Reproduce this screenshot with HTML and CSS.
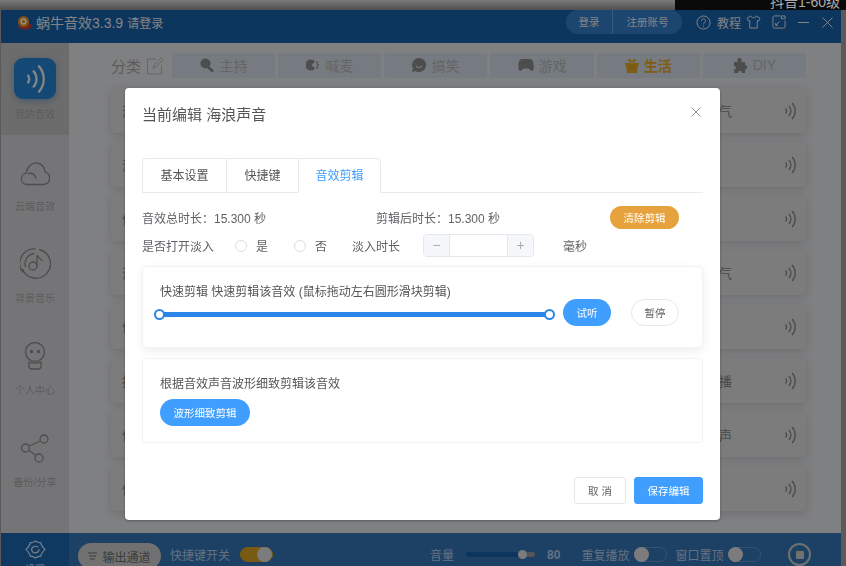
FILE: index.html
```html
<!DOCTYPE html>
<html lang="en">
<head>
    <meta charset="UTF-8">
    <meta name="viewport" content="width=device-width, initial-scale=1.0">
    <title>蜗牛音效</title>
    <link rel="stylesheet" href="styles.css">
</head>
<body>

    <svg class="defs" width="0" height="0">
        <symbol id="wave" viewBox="0 0 12 18">
            <path d="M1.5 6.5a3.5 3.5 0 0 1 0 5M4.8 4a7 7 0 0 1 0 10M8 1a11.500 11.500 0 0 1 0 16" fill="none" stroke="currentColor" stroke-width="1.4"/>
        </symbol>
    </svg>

    <div class="desk-top">
        <div class="desk-left"></div>
        <div class="desk-right">抖音1-60级</div>
    </div>

    <div class="app">
        <header class="titlebar">
            <svg class="logo" width="15" height="15" viewBox="0 0 15 15">
                <ellipse cx="8" cy="11" rx="6.500" ry="3.500" fill="#c23a30"/>
                <circle cx="6.500" cy="6.500" r="5.500" fill="#d9861c"/>
                <circle cx="6.500" cy="6.500" r="2.400" fill="none" stroke="#eee" stroke-width="1.500"/>
            </svg>
            <span class="app-name">蜗牛音效3.3.9</span>
            <span class="app-login">请登录</span>
            <div class="account">
                <span class="account-item login">登录</span>
                <span class="account-item register">注册账号</span>
            </div>
            <svg class="help" width="15" height="15" viewBox="0 0 16 16" fill="none" stroke="currentColor">
                <circle cx="8" cy="8" r="7"/>
                <path d="M5.800 6.200a2.200 2.200 0 1 1 3.400 1.900c-.8.500-1.200.9-1.200 1.900M8 11.500v1.200"/>
            </svg>
            <span class="guide">教程</span>
            <svg class="shirt" width="15" height="14" viewBox="0 0 16 15" fill="none" stroke="currentColor">
                <path d="M5 1 1 3.500l1.500 3L4 6v8h8V6l1.500.5 1.500-3L11 1c-.5 2.500-5.500 2.500-6 0z"/>
            </svg>
            <svg class="resize" width="14" height="14" viewBox="0 0 15 15" fill="none" stroke="currentColor">
                <path d="M9 1H2.500A1.500 1.500 0 0 0 1 2.500v10A1.500 1.500 0 0 0 2.500 14h10a1.500 1.500 0 0 0 1.500-1.500V6M4 11l4-4M4 8.500V11h2.500M10 1h4v3h-4z"/>
            </svg>
            <svg class="minimize" width="11" height="11" viewBox="0 0 11 11" stroke="currentColor"><path d="M0 5.500h11"/></svg>
            <svg class="close" width="11" height="11" viewBox="0 0 11 11" stroke="currentColor"><path d="m.5.500 10 10M10.500.500l-10 10"/></svg>
        </header>

        <div class="middle">
            <nav class="sidebar">
                <div class="side-item active">
                    <div class="side-badge">
                        <svg width="20" height="30" viewBox="0 0 12 18" class="badge-wave"><use href="#wave"/></svg>
                    </div>
                    <span>我的音效</span>
                </div>
                <div class="side-item">
                    <svg width="30" height="26" viewBox="0 0 30 26" fill="none" stroke="currentColor" stroke-width="1.300">
                        <path d="M7 23.500a5.700 5.700 0 0 1-1-11.300C7 5.500 12 1.500 17 2c5 .4 8 4.500 8 9a6.400 6.400 0 0 1-1 12.500z"/>
                        <path d="M8 12.500c4-1 7 1 8 5"/>
                    </svg>
                    <span>云端音效</span>
                </div>
                <div class="side-item">
                    <svg width="31" height="31" viewBox="0 0 31 31" fill="none" stroke="currentColor" stroke-width="1.300">
                        <path d="M19 1.500A14.500 14.500 0 1 1 2.500 21M3 24.500A14.500 14.500 0 0 1 15.500 1"/>
                        <path d="M5.500 19a10.500 10.500 0 0 1 9-13.500"/>
                        <circle cx="13" cy="18" r="4"/>
                        <path d="M17 18V7c1 3 4 3 5 6"/>
                    </svg>
                    <span>背景音乐</span>
                </div>
                <div class="side-item">
                    <svg width="22" height="30" viewBox="0 0 22 30" fill="none" stroke="currentColor" stroke-width="1.300">
                        <circle cx="11" cy="11" r="9.500"/>
                        <circle cx="7.500" cy="10.500" r="1" fill="currentColor"/>
                        <circle cx="14.500" cy="10.500" r="1" fill="currentColor"/>
                        <path d="M5 21v4a3 3 0 0 0 3 3h6a3 3 0 0 0 3-3v-4c-3 1.500-9 1.500-12 0z"/>
                    </svg>
                    <span>个人中心</span>
                </div>
                <div class="side-item">
                    <svg width="30" height="29" viewBox="0 0 30 29" fill="none" stroke="currentColor" stroke-width="1.300">
                        <circle cx="24" cy="5" r="4"/>
                        <circle cx="5.500" cy="14" r="4"/>
                        <circle cx="19" cy="24" r="4"/>
                        <path d="m20.500 7-11.500 5M9 16.500l7 5"/>
                    </svg>
                    <span>备份/分享</span>
                </div>
            </nav>

            <main class="content">
                <div class="categories">
                    <div class="cat-title">
                        <span>分类</span>
                        <svg width="18" height="18" viewBox="0 0 18 18" fill="none" stroke="currentColor">
                            <path d="M10 2H1.500v15h14V8M7 11l1-3 7-7 2 2-7 7z"/>
                        </svg>
                    </div>
                    <div class="cat-list">
                        <div class="cat">
                            <svg width="15" height="15" viewBox="0 0 15 15"><circle cx="5.500" cy="5.500" r="5" fill="currentColor"/><path d="m8 9 5 4.500" stroke="currentColor" stroke-width="3"/></svg>
                            主持
                        </div>
                        <div class="cat">
                            <svg width="14" height="12" viewBox="0 0 14 12"><path d="M9 2.500A5.500 5.500 0 1 0 9 9.500L5.500 6z" fill="currentColor"/><circle cx="11" cy="3.500" r="1" fill="currentColor"/><circle cx="12" cy="6" r="1" fill="currentColor"/><circle cx="11" cy="8.500" r="1" fill="currentColor"/></svg>
                            喊麦
                        </div>
                        <div class="cat">
                            <svg width="14" height="14" viewBox="0 0 14 14"><path d="M7 0a7 7 0 1 1-3.500 13L0 14l1-3.500A7 7 0 0 1 7 0z" fill="currentColor"/><path d="M4 8c1.500 2 4.500 2 6 0" fill="none" stroke="#cdd9e4" stroke-width="1.200"/></svg>
                            搞笑
                        </div>
                        <div class="cat">
                            <svg width="16" height="12" viewBox="0 0 16 12"><path d="M4 0h8c2 0 3 1.500 3.500 4.500S16 12 14 12c-1.500 0-2.500-2.500-4-2.500H6C4.500 9.500 3.500 12 2 12S0 7.500.5 4.500 2 0 4 0z" fill="currentColor"/></svg>
                            游戏
                        </div>
                        <div class="cat cat-active">
                            <svg width="14" height="16" viewBox="0 0 14 16"><path d="M0 6h14v2h-1l-1 8H2L1 8H0zM7 5.500C7 3 5 2 2.500 2 3 4.500 5 5.500 7 5.500c0-2.500 2-3.500 4.500-3.500C11 4.500 9 5.500 7 5.500z" fill="currentColor"/></svg>
                            生活
                        </div>
                        <div class="cat cat-diy">
                            <svg width="15" height="15" viewBox="0 0 15 15"><path d="M1 4h3.500C4 1 5 0 6.500 0S9 1 8.500 4H12v3c3-.5 3 5 0 4.500V15H8.500c.5-3-4-3-3.500 0H1v-3.500c2.500.5 2.500-4 0-3.500z" fill="currentColor"/></svg>
                            DIY
                        </div>
                    </div>
                </div>

                <div class="cards">
                    <div class="card"><span>海浪</span><span class="card-tag">天气</span><svg class="card-wave" width="12" height="18"><use href="#wave"/></svg></div>
                    <div class="card"><span>海鸥</span><span class="card-tag"></span><svg class="card-wave" width="12" height="18"><use href="#wave"/></svg></div>
                    <div class="card"><span>信号</span><span class="card-tag"></span><svg class="card-wave" width="12" height="18"><use href="#wave"/></svg></div>
                    <div class="card"><span>海风</span><span class="card-tag">天气</span><svg class="card-wave" width="12" height="18"><use href="#wave"/></svg></div>
                    <div class="card"><span>信息</span><span class="card-tag"></span><svg class="card-wave" width="12" height="18"><use href="#wave"/></svg></div>
                    <div class="card"><span>拍手</span><span class="card-tag">直播</span><svg class="card-wave" width="12" height="18"><use href="#wave"/></svg></div>
                    <div class="card"><span>信鸽</span><span class="card-tag">叫声</span><svg class="card-wave" width="12" height="18"><use href="#wave"/></svg></div>
                    <div class="card"><span>信件</span><span class="card-tag"></span><svg class="card-wave" width="12" height="18"><use href="#wave"/></svg></div>
                </div>
            </main>
        </div>

        <footer class="bottombar">
            <div class="settings">
                <svg width="21" height="19" viewBox="0 0 20 20" preserveAspectRatio="none" fill="none" stroke="currentColor" stroke-width="1.200">
                    <path d="M10 1c1.500 1.500 2.500 2 5 2 .3 2.500 1 3.500 4 7-3 3.500-3.700 4.500-4 7-2.500 0-3.500.5-5 2-1.500-1.500-2.500-2-5-2-.3-2.500-1-3.500-4-7 3-3.500 3.700-4.500 4-7 2.500 0 3.500-.5 5-2z"/>
                    <path d="M12.500 7.800a3.500 3.500 0 1 0 .8 1.800"/>
                </svg>
                <span>设置</span>
            </div>
            <div class="channel">
                <svg width="9" height="8" viewBox="0 0 9 8" stroke="currentColor"><path d="M0 1h9M1 4h7M2 7h5"/></svg>
                输出通道
            </div>
            <span class="hotkey">快捷键开关</span>
            <div class="toggle toggle-on"><i></i></div>
            <span class="volume">音量</span>
            <div class="vol-slider"><div class="vol-fill"></div><i></i><div class="vol-rest"></div></div>
            <span class="vol-num">80</span>
            <span class="repeat">重复播放</span>
            <div class="toggle"><i></i></div>
            <span class="pin">窗口置顶</span>
            <div class="toggle"><i></i></div>
            <div class="stop"><i></i></div>
        </footer>

        <div class="overlay">
            <div class="modal">
                <div class="modal-head">
                    <span class="modal-title">当前编辑 海浪声音</span>
                    <svg class="modal-close" width="10" height="10" viewBox="0 0 10 10" stroke="currentColor"><path d="m.5.500 9 9M9.500.500l-9 9"/></svg>
                </div>

                <div class="tabs">
                    <div class="tab tab-first">基本设置</div>
                    <div class="tab tab-second">快捷键</div>
                    <div class="tab tab-active">音效剪辑</div>
                </div>

                <div class="row row-time">
                    <span class="total">音效总时长：15.300 秒</span>
                    <span>剪辑后时长：15.300 秒</span>
                    <button class="btn btn-orange">清除剪辑</button>
                </div>

                <div class="row row-fade">
                    <span class="fade-label">是否打开淡入</span>
                    <i class="radio"></i><span class="radio-text">是</span>
                    <i class="radio"></i><span class="radio-text no">否</span>
                    <span class="fade-time">淡入时长</span>
                    <div class="stepper">
                        <span class="step">−</span>
                        <span class="step-input"></span>
                        <span class="step">+</span>
                    </div>
                    <span class="unit">毫秒</span>
                </div>

                <section class="panel panel-quick">
                    <p class="panel-text">快速剪辑 快速剪辑该音效 (鼠标拖动左右圆形滑块剪辑)</p>
                    <div class="quick-row">
                        <div class="range">
                            <i class="handle handle-left"></i>
                            <i class="handle handle-right"></i>
                        </div>
                        <button class="btn btn-blue">试听</button>
                        <button class="btn btn-plain">暂停</button>
                    </div>
                </section>

                <section class="panel panel-wave">
                    <p class="panel-text">根据音效声音波形细致剪辑该音效</p>
                    <button class="btn btn-blue btn-wave">波形细致剪辑</button>
                </section>

                <div class="modal-foot">
                    <button class="foot-btn foot-cancel">取 消</button>
                    <button class="foot-btn foot-save">保存编辑</button>
                </div>
            </div>
        </div>
    </div>

</body>
</html>
```

FILE: styles.css
```css
* {
    box-sizing: border-box;
}
html, body {
    margin: 0;
    height: 100%;
}
body {
    position: relative;
    overflow: hidden;
    background-color: #5a5a5c;
    font-family: "Liberation Sans", "Noto Sans CJK SC", sans-serif;
    font-size: 12px;
}
.defs {
    position: absolute;
}
p {
    margin: 0;
}
i {
    display: block;
}

/* what is behind the window */
.desk-top {
    display: flex;
    height: 10px;
}
.desk-left {
    flex: 1;
    background: linear-gradient(#7a7a7a, #505050);
}
.desk-right {
    width: 171px;
    padding-left: 95px;
    background-color: #0a0a0a;
    color: #aaa;
    font-size: 14px;
    line-height: 4px;
    white-space: nowrap;
    overflow: hidden;
}

/* window */
.app {
    position: absolute;
    left: 1px;
    top: 10px;
    width: 840px;
    height: 556px;
    display: flex;
    flex-direction: column;
    overflow: hidden;
    filter: blur(0.5px);
}
.titlebar {
    height: 33px;
    flex-shrink: 0;
    display: flex;
    align-items: center;
    padding: 0 0 9px 16px;
    background-color: #175a9f;
    color: #ddd;
}
.logo {
    margin-right: 4px;
}
.app-name {
    font-size: 14px;
}
.app-login {
    margin-left: 4px;
}
.account {
    display: flex;
    align-items: center;
    height: 24px;
    margin-left: auto;
    border-radius: 12px;
    background-color: #2f73bb;
    font-size: 10.5px;
}
.account-item {
    display: block;
    line-height: 24px;
    text-align: center;
}
.login {
    width: 47px;
    border-right: 1px solid #5f94cc;
}
.register {
    width: 69px;
}
.help {
    margin-left: 14px;
}
.guide {
    margin-left: 6px;
}
.shirt {
    margin-left: 5px;
}
.resize {
    margin-left: 11px;
}
.minimize {
    margin-left: 12px;
}
.close {
    margin-left: 13px;
    margin-right: 8px;
}

.middle {
    flex: 1;
    display: flex;
    min-height: 0;
}
.sidebar {
    width: 68px;
    flex-shrink: 0;
    background-color: #c3c4c6;
}
.side-item {
    height: 92px;
    display: flex;
    flex-direction: column;
    align-items: center;
    justify-content: flex-end;
    padding-bottom: 14px;
    font-size: 10px;
    color: #9a9a9a;
}
.side-item svg {
    margin-bottom: 11px;
    color: #808080;
}
.side-item.active {
    background-color: #b4b4b4;
}
.side-badge {
    width: 42px;
    height: 41px;
    display: flex;
    align-items: center;
    justify-content: center;
    margin-bottom: 7px;
    border-radius: 9px;
    background-color: #2278c4;
    box-shadow: 0 2px 6px rgba(30, 100, 180, 0.4);
}
.side-badge .badge-wave {
    margin: 0;
    color: #ddd;
}

.content {
    flex: 1;
    padding: 10px 35px 0 42px;
    min-width: 0;
    overflow: hidden;
    background-color: #d4d5d7;
}
.categories {
    display: flex;
    align-items: center;
    height: 25px;
}
.cat-title {
    width: 61px;
    display: flex;
    align-items: center;
    gap: 5px;
    font-size: 15px;
    color: #999;
}
.cat-title svg {
    color: #aaa;
}
.cat-list {
    flex: 1;
    display: grid;
    grid-template-columns: repeat(6, 1fr);
    gap: 3px;
}
.cat {
    height: 25px;
    display: flex;
    align-items: center;
    justify-content: center;
    gap: 5px;
    padding-bottom: 1px;
    background-color: #c4cdd8;
    border-radius: 2px;
    font-size: 14px;
    color: #a8a8a8;
}
.cat svg {
    color: #808080;
}
.cat-active {
    font-weight: bold;
    color: #d49a22;
}
.cat-active svg {
    color: #d49a22;
}
.cards {
    display: flex;
    flex-direction: column;
    gap: 9px;
    margin-top: 10px;
}
.card {
    height: 45px;
    flex-shrink: 0;
    display: flex;
    align-items: center;
    padding: 0 10px 0 11px;
    border-radius: 4px;
    background-color: #cfcfcf;
    box-shadow: 0 2px 8px rgba(0, 0, 0, 0.15);
    font-size: 13px;
    color: #7a7a7a;
}
.card-tag {
    width: 65px;
    margin-left: auto;
    margin-right: 52px;
    text-align: right;
}
.card-wave {
    color: #808080;
}

.bottombar {
    height: 33px;
    flex-shrink: 0;
    display: flex;
    align-items: center;
    padding-top: 10px;
    background-color: #316ba8;
    color: #a6bed8;
}
.settings {
    width: 68px;
    height: 33px;
    flex-shrink: 0;
    align-self: flex-start;
    display: flex;
    flex-direction: column;
    align-items: center;
    margin-top: -10px;
    margin-right: 9px;
    padding-top: 7px;
    background-color: #1c5fa4;
    color: #c8d8e8;
    font-size: 10px;
    overflow: hidden;
}
.settings svg {
    flex-shrink: 0;
}
.settings span {
    flex-shrink: 0;
    margin-top: 5px;
    line-height: 12px;
}
.channel {
    width: 83px;
    height: 26px;
    flex-shrink: 0;
    align-self: flex-start;
    display: flex;
    align-items: center;
    justify-content: center;
    gap: 5px;
    margin-right: 9px;
    border-radius: 13px;
    background-color: #bcbcbc;
    color: #666;
}
.hotkey {
    margin-right: 10px;
}
.toggle {
    width: 33px;
    height: 15px;
    flex-shrink: 0;
    border-radius: 8px;
    border: 1px solid #5d88b8;
}
.toggle i {
    width: 15px;
    height: 15px;
    margin: -1px 0 0 -1px;
    border-radius: 50%;
    background-color: #cfcfcf;
}
.toggle-on {
    border-color: #c8961e;
    background-color: #c8961e;
}
.toggle-on i {
    margin-left: 16px;
}
.volume {
    margin-left: 157px;
    margin-right: 12px;
}
.vol-slider {
    display: flex;
    align-items: center;
    width: 69px;
}
.vol-fill {
    flex: 1;
    height: 5px;
    border-radius: 3px 0 0 3px;
    background-color: #175a9f;
}
.vol-slider i {
    width: 9px;
    height: 9px;
    border-radius: 50%;
    background-color: #cfcfcf;
}
.vol-rest {
    width: 8px;
    height: 5px;
    border-radius: 0 3px 3px 0;
    background-color: #909090;
}
.vol-num {
    margin-left: 12px;
    font-weight: bold;
}
.repeat {
    margin-left: 21px;
    margin-right: 5px;
}
.pin {
    margin-left: 8px;
    margin-right: 5px;
}
.stop {
    width: 23px;
    height: 23px;
    flex-shrink: 0;
    display: flex;
    align-items: center;
    justify-content: center;
    margin-left: 27px;
    border: 2px solid #bcbcbc;
    border-radius: 50%;
}
.stop i {
    width: 8px;
    height: 8px;
    border-radius: 1px;
    background-color: #bcbcbc;
}

/* dialog */
.overlay {
    position: absolute;
    inset: 0;
    z-index: 10;
    padding: 78px 0 0 124px;
    background: rgba(0, 0, 0, 0.4);
}
.modal {
    width: 595px;
    height: 432px;
    padding: 0 17px;
    border-radius: 4px;
    background-color: #fff;
    box-shadow: 0 1px 3px rgba(0, 0, 0, 0.3);
    color: #606266;
}
.modal-head {
    height: 70px;
    display: flex;
    justify-content: space-between;
    padding-top: 18px;
}
.modal-title {
    font-size: 15px;
    line-height: 18px;
    color: #555;
}
.modal-close {
    margin-top: 1px;
    margin-right: 2px;
    color: #909399;
}
.tabs {
    display: flex;
    height: 35px;
    border-bottom: 1px solid #e8eaf0;
}
.tab {
    height: 35px;
    line-height: 34px;
    text-align: center;
    border: 1px solid #e8eaf0;
    border-right: none;
    color: #555;
}
.tab-first {
    width: 84px;
    border-radius: 4px 0 0 0;
}
.tab-second {
    width: 72px;
}
.tab-active {
    width: 83px;
    border-right: 1px solid #e8eaf0;
    border-bottom-color: #fff;
    border-radius: 0 4px 0 0;
    color: #409eff;
}
.row {
    display: flex;
    align-items: center;
    height: 23px;
}
.row-time {
    margin-top: 13px;
}
.total {
    width: 234px;
}
.row-time .btn {
    margin-left: auto;
    margin-right: 24px;
    width: 69px;
}
.row-fade {
    margin-top: 5px;
}
.fade-label {
    width: 93px;
}
.radio {
    width: 12px;
    height: 12px;
    border: 1px solid #dcdfe6;
    border-radius: 50%;
}
.radio-text {
    width: 47px;
    padding-left: 9px;
}
.radio-text.no {
    width: 46px;
}
.fade-time {
    width: 71px;
}
.stepper {
    display: flex;
    width: 111px;
    height: 23px;
    border: 1px solid #e4e7ed;
    border-radius: 4px;
    overflow: hidden;
}
.step {
    width: 25px;
    line-height: 20px;
    text-align: center;
    background-color: #f5f7fa;
    font-size: 14px;
    color: #aaa;
}
.step-input {
    flex: 1;
    border-left: 1px solid #e4e7ed;
    border-right: 1px solid #e4e7ed;
}
.unit {
    margin-left: 29px;
}
.panel {
    margin-top: 9px;
    padding: 18px 0 0 17px;
    border: 1px solid #f0f2f5;
    border-radius: 4px;
    background-color: #fff;
}
.panel-text {
    line-height: 14px;
    color: #555;
}
.panel-quick {
    height: 82px;
    box-shadow: 0 3px 10px rgba(0, 0, 0, 0.07);
}
.panel-wave {
    height: 85px;
    margin-top: 10px;
}
.quick-row {
    display: flex;
    align-items: center;
}
.range {
    position: relative;
    width: 390px;
    height: 5px;
    margin-top: 3px;
    margin-right: 13px;
    background-color: #2a86e8;
    border-radius: 3px;
}
.handle {
    position: absolute;
    top: -3px;
    width: 11px;
    height: 11px;
    border: 2px solid #2a86e8;
    border-radius: 50%;
    background-color: #fff;
}
.handle-left {
    left: -6px;
}
.handle-right {
    right: -5px;
}
.btn {
    height: 27px;
    width: 48px;
    padding: 0;
    border: 1px solid transparent;
    border-radius: 14px;
    font-family: inherit;
    font-size: 10.5px;
    color: #fff;
}
.btn-orange {
    height: 23px;
    background-color: #e6a23c;
}
.btn-blue {
    background-color: #409eff;
}
.btn-plain {
    margin-left: 20px;
    border-color: #e4e7ed;
    background-color: #fff;
    color: #606266;
}
.btn-wave {
    display: block;
    width: 90px;
    margin-top: 8px;
}
.modal-foot {
    display: flex;
    justify-content: flex-end;
    gap: 8px;
    margin-top: 34px;
}
.foot-btn {
    height: 27px;
    padding: 0;
    border-radius: 3px;
    font-family: inherit;
    font-size: 10.5px;
}
.foot-cancel {
    width: 52px;
    border: 1px solid #e4e7ed;
    background-color: #fff;
    color: #606266;
}
.foot-save {
    width: 69px;
    border: 1px solid #409eff;
    background-color: #409eff;
    color: #fff;
}
```
